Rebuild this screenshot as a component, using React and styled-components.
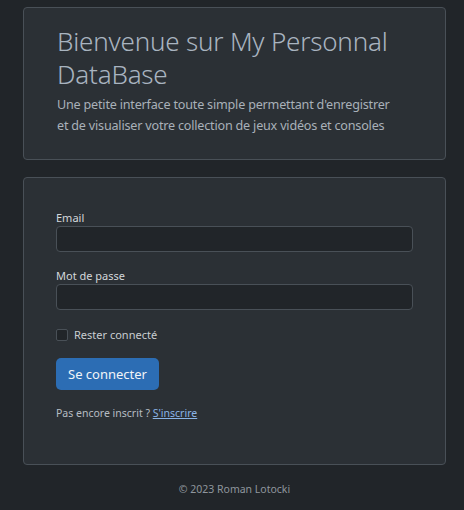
import styled, { createGlobalStyle } from 'styled-components';

const GlobalStyle = createGlobalStyle`
  html, body {
    margin: 0;
    padding: 0;
    background: #212529;
  }
  body {
    font-family: "Noto Sans", "DejaVu Sans", sans-serif;
    color: #dee2e6;
  }
`

const Page = styled.div`
  padding: 7px 18px 0 23px;
  display: flex;
  flex-direction: column;
  gap: 17px;
`

const Card = styled.div`
  background: #2b3035;
  border: 1px solid #495057;
  border-radius: 4px;
  box-sizing: border-box;
  height: ${props => props.h}px;
  padding: ${props => props.pad};
`

const Title = styled.h1`
  margin: 0;
  font-size: 26px;
  font-weight: 300;
  line-height: 33px;
  color: #a9b4c0;
  letter-spacing: -0.2px;
`

const Lead = styled.p`
  margin: 3px 0 0;
  max-width: 338px;
  font-size: 12.6px;
  line-height: 21px;
  letter-spacing: -0.2px;
  color: #a9b1b9;
`

const Form = styled.form`
  display: flex;
  flex-direction: column;
`

const Field = styled.div`
  display: flex;
  flex-direction: column;
  margin-bottom: 17px;
`

const Label = styled.label`
  font-size: 11px;
  line-height: 14px;
  color: #d3d7db;
  margin-bottom: 1px;
`

const Input = styled.input`
  height: 26px;
  box-sizing: border-box;
  background: #212529;
  border: 1px solid #495057;
  border-radius: 4px;
  outline: none;
`

const CheckRow = styled.label`
  display: flex;
  align-items: center;
  gap: 6px;
  font-size: 11px;
  color: #c9cdd1;
  margin-bottom: 16px;
`

const Box = styled.span`
  width: 10px;
  height: 10px;
  border: 1px solid #495057;
  border-radius: 2px;
  background: #212529;
`

const Button = styled.button`
  align-self: flex-start;
  background: #2c6db4;
  color: #f1f4f8;
  border: none;
  border-radius: 5px;
  height: 32px;
  padding: 0 12px;
  font-family: inherit;
  font-size: 13px;
  margin-bottom: 16px;
`

const Note = styled.p`
  margin: 0;
  font-size: 10.5px;
  color: #b6bcc2;
`

const Link = styled.a`
  color: #8ab4e6;
  text-decoration: underline;
`

const Footer = styled.footer`
  text-align: center;
  font-size: 10.5px;
  color: #8f969d;
  padding: 17px 0 0;
  margin-left: 5px;
`

export default function App() {
  return (
    <>
      <GlobalStyle />
      <Page>
        <Card h={153} pad="17px 33px">
          <Title>Bienvenue sur My Personnal DataBase</Title>
          <Lead>Une petite interface toute simple permettant d'enregistrer et de visualiser votre collection de jeux vidéos et consoles</Lead>
        </Card>
        <Card h={288} pad="33px 32px">
          <Form>
            <Field>
              <Label>Email</Label>
              <Input type="email" />
            </Field>
            <Field>
              <Label>Mot de passe</Label>
              <Input type="password" />
            </Field>
            <CheckRow>
              <Box />
              Rester connecté
            </CheckRow>
            <Button type="button">Se connecter</Button>
            <Note>Pas encore inscrit ? <Link href="#">S'inscrire</Link></Note>
          </Form>
        </Card>
      </Page>
      <Footer>© 2023 Roman Lotocki</Footer>
    </>
  )
}
